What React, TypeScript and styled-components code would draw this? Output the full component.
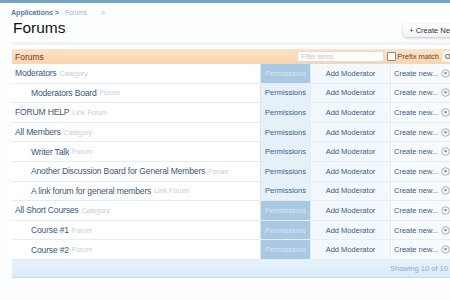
import React from "react";
import styled, { createGlobalStyle } from "styled-components";

const GlobalStyle = createGlobalStyle`
  html, body {
    margin: 0;
    padding: 0;
    background: #ffffff;
    overflow: hidden;
  }
  body {
    font-family: "Liberation Sans", Arial, sans-serif;
  }
`;

const Page = styled.div`
  width: 450px;
  height: 300px;
  overflow: hidden;
  background: #fdfeff;
`;

const TopBar = styled.div`
  height: 3px;
  background: #76a3c6;
`;

const Head = styled.div`
  padding: 4px 0 0 11px;
`;

const Crumbs = styled.div`
  display: flex;
  align-items: center;
  height: 10px;
`;

const Crumb = styled.span<{ $current?: boolean }>`
  color: ${({ $current }) => ($current ? "#a8b2bc" : "#5b7ba3")};
  font-weight: ${({ $current }) => ($current ? "normal" : "bold")};
  font-size: ${({ $current }) => ($current ? "6.5px" : "7.2px")};
  margin-right: ${({ $current }) => ($current ? "14px" : "6px")};
  letter-spacing: ${({ $current }) => ($current ? "0" : "-0.1px")};
`;

const Arrow = styled.span`
  color: #9aabbb;
  font-size: 7px;
`;

const TitleRow = styled.div`
  display: flex;
  align-items: center;
  justify-content: space-between;
  height: 22px;
`;

const Title = styled.h1`
  margin: 0 0 0 2px;
  font-size: 15.5px;
  font-weight: normal;
  color: #111;
`;

const CreateButton = styled.div`
  margin-right: -35px;
  margin-top: 4px;
  padding: 2px 6px;
  font-size: 7.5px;
  color: #333;
  background: linear-gradient(#ffffff, #f0f2f5);
  border-radius: 4px;
  box-shadow: 0 1px 3px rgba(0, 0, 0, 0.25);
  white-space: nowrap;
`;

const Band = styled.div`
  margin: 3px 0 0 12px;
  height: 3px;
  background: #edf4fa;
`;

const Table = styled.div`
  margin: 4px 0 0 12px;
  width: 448px;
`;

const HeaderRow = styled.div`
  display: flex;
  align-items: center;
  height: 15px;
  background: linear-gradient(#fbe3c6, #f8d6ad);
  padding-left: 3px;
`;

const HeaderTitle = styled.div`
  flex: 1;
  color: #8b2a1e;
  font-size: 8.5px;
`;

const FilterInput = styled.div`
  width: 82px;
  height: 9px;
  background: #fff;
  border: 1px solid #e6ddd0;
  font-size: 6.5px;
  color: #c4c4c4;
  line-height: 9px;
  padding-left: 3px;
`;

const CheckBox = styled.span`
  width: 7px;
  height: 7px;
  margin-left: 3px;
  border: 1px solid #8a8a8a;
  background: #fff;
  border-radius: 1px;
`;

const PrefixLabel = styled.span`
  font-size: 7.5px;
  color: #7a3a2a;
  margin-left: 1px;
`;

const OkButton = styled.span`
  margin-left: 3px;
  margin-right: 3px;
  padding: 0 3px;
  height: 11px;
  line-height: 11px;
  font-size: 7px;
  color: #333;
  background: #f3f3f3;
  border-radius: 3px;
`;

const Row = styled.div`
  display: flex;
  height: 19.6px;
  box-sizing: border-box;
  border-bottom: 1px solid #e3edf5;
  background: #ffffff;
`;

const NameCell = styled.div<{ $indent?: boolean }>`
  flex: 1;
  display: flex;
  align-items: center;
  padding-left: ${({ $indent }) => ($indent ? "19px" : "3px")};
  white-space: nowrap;
`;

const Name = styled.span`
  font-size: 8.6px;
  letter-spacing: -0.2px;
  color: #3a5880;
`;

const Kind = styled.span`
  font-size: 7px;
  color: #c6ccd3;
  margin-left: 3px;
`;

const PermCell = styled.div<{ $active?: boolean }>`
  width: 50px;
  display: flex;
  align-items: center;
  justify-content: center;
  font-size: 7.5px;
  background: ${({ $active }) => ($active ? "#a9c9e2" : "#e5f0f8")};
  color: ${({ $active }) => ($active ? "#d9e8f3" : "#3e628a")};
  border-left: 1px solid #d6e5f0;
  box-sizing: border-box;
`;

const ModCell = styled.div`
  width: 80px;
  display: flex;
  align-items: center;
  justify-content: center;
  font-size: 7.5px;
  color: #3e5c82;
  background: #f3f8fc;
  border-left: 1px solid #e3edf5;
  box-sizing: border-box;
`;

const CreateCell = styled.div`
  width: 70px;
  display: flex;
  align-items: center;
  padding-left: 3px;
  font-size: 7.5px;
  color: #3e5c82;
  background: #f7fbfd;
  border-left: 1px solid #e3edf5;
  box-sizing: border-box;
  white-space: nowrap;
`;

const Footer = styled.div`
  height: 17px;
  display: flex;
  align-items: center;
  padding-left: 378px;
  background: linear-gradient(#e6f2fb, #d9ebf8);
  border-bottom: 1px solid #c9dcec;
  font-size: 7.5px;
  color: #8ab0cd;
  white-space: nowrap;
`;

const MenuIcon = () => (
  <svg width="9" height="9" viewBox="0 0 9 9" style={{ marginLeft: 3 }}>
    <circle cx="4.5" cy="4.5" r="3.8" fill="#f4f4f4" stroke="#9aa3ab" strokeWidth="0.8" />
    <path d="M2.7 3.6 L6.3 3.6 L4.5 5.6 Z" fill="#6c7680" />
  </svg>
);

type Node = { name: string; kind: string; indent?: boolean; active?: boolean };

const nodes: Node[] = [
  { name: "Moderators", kind: "Category", active: true },
  { name: "Moderators Board", kind: "Forum", indent: true },
  { name: "FORUM HELP", kind: "Link Forum" },
  { name: "All Members", kind: "Category" },
  { name: "Writer Talk", kind: "Forum", indent: true },
  { name: "Another Discussion Board for General Members", kind: "Forum", indent: true },
  { name: "A link forum for general members", kind: "Link Forum", indent: true },
  { name: "All Short Courses", kind: "Category", active: true },
  { name: "Course #1", kind: "Forum", indent: true, active: true },
  { name: "Course #2", kind: "Forum", indent: true, active: true },
];

export default function App() {
  return (
    <Page>
      <GlobalStyle />
      <TopBar />
      <Head>
        <Crumbs>
          <Crumb>Applications &gt;</Crumb>
          <Crumb $current>Forums</Crumb>
          <Arrow>&gt;</Arrow>
        </Crumbs>
        <TitleRow>
          <Title>Forums</Title>
          <CreateButton>+ Create New Forum</CreateButton>
        </TitleRow>
      </Head>
      <Band />
      <Table>
        <HeaderRow>
          <HeaderTitle>Forums</HeaderTitle>
          <FilterInput>Filter items</FilterInput>
          <CheckBox />
          <PrefixLabel>Prefix match</PrefixLabel>
          <OkButton>Ok</OkButton>
        </HeaderRow>
        {nodes.map((n) => (
          <Row key={n.name}>
            <NameCell $indent={n.indent}>
              <Name>{n.name}</Name>
              <Kind>{n.kind}</Kind>
            </NameCell>
            <PermCell $active={n.active}>Permissions</PermCell>
            <ModCell>Add Moderator</ModCell>
            <CreateCell>
              Create new...
              <MenuIcon />
            </CreateCell>
          </Row>
        ))}
        <Footer>Showing 10 of 10 items</Footer>
      </Table>
    </Page>
  );
}
